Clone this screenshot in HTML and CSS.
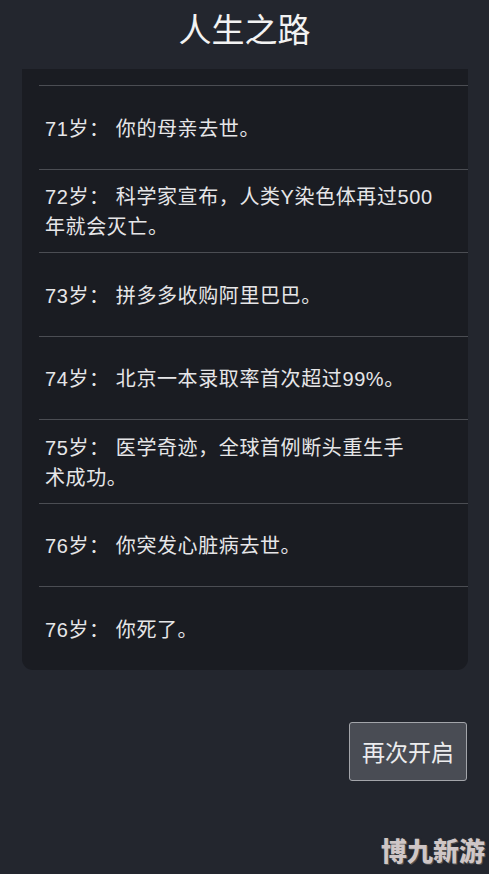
FILE: index.html
```html
<!DOCTYPE html>
<html lang="zh-CN">
<head>
<meta charset="utf-8">
<title>人生之路</title>
<link rel="stylesheet" href="styles.css">
</head>
<body>
<div class="screen">
  <h1 class="title">人生之路</h1>
  <div class="card">
    <div class="row"><p class="event">71岁： 你的母亲去世。</p></div>
    <div class="row"><p class="event">72岁： 科学家宣布，人类Y染色体再过500<br>年就会灭亡。</p></div>
    <div class="row"><p class="event">73岁： 拼多多收购阿里巴巴。</p></div>
    <div class="row"><p class="event">74岁： 北京一本录取率首次超过99%。</p></div>
    <div class="row"><p class="event">75岁： 医学奇迹，全球首例断头重生手<br>术成功。</p></div>
    <div class="row"><p class="event">76岁： 你突发心脏病去世。</p></div>
    <div class="row"><p class="event">76岁： 你死了。</p></div>
  </div>
  <div class="actions">
    <button class="restart">再次开启</button>
  </div>
  <div class="watermark">博九新游</div>
</div>
</body>
</html>
```

FILE: styles.css
```css
html, body {
  margin: 0;
  padding: 0;
  background: #23262e;
}
body {
  font-family: "Liberation Sans", "Noto Sans CJK SC", sans-serif;
  color: #e8e8ea;
}
.screen {
  position: relative;
  width: 489px;
  height: 874px;
  overflow: hidden;
  background: #23262e;
}
.title {
  margin: 0;
  height: 69px;
  display: flex;
  align-items: center;
  justify-content: center;
  font-family: "Noto Sans CJK SC", sans-serif;
  font-weight: 400;
  font-size: 33px;
  color: #f2f2f2;
  padding-bottom: 14px;
  box-sizing: border-box;
}
.card {
  margin: 0 21px 0 22px;
  background: #1a1c22;
  border-radius: 0 0 11px 11px;
  padding-top: 16px;
}
.row {
  box-sizing: border-box;
  height: 83.5px;
  margin-left: 17px;
  border-top: 1.5px solid #4b4d53;
  display: flex;
  align-items: center;
  padding-left: 6px;
}
.event {
  margin: 0;
  font-size: 20px;
  line-height: 30px;
  letter-spacing: 0.6px;
  color: #e6e6e8;
  padding-top: 3px;
}
.actions {
  display: flex;
  justify-content: flex-end;
  padding: 52px 22px 0 0;
}
.restart {
  width: 118px;
  height: 59px;
  background: #494c54;
  border: 1.5px solid #a3a5aa;
  border-radius: 3px;
  color: #ececee;
  font-family: "Noto Sans CJK SC", sans-serif;
  font-size: 23px;
  padding: 0;
}
.watermark {
  position: absolute;
  right: 4px;
  bottom: 6px;
  font-family: "Noto Sans CJK SC", sans-serif;
  font-weight: 900;
  font-size: 26px;
  color: #cfc6c6;
  text-shadow: 0 0 2px #3a3a3a, 1px 1px 0 #555;
}
```
